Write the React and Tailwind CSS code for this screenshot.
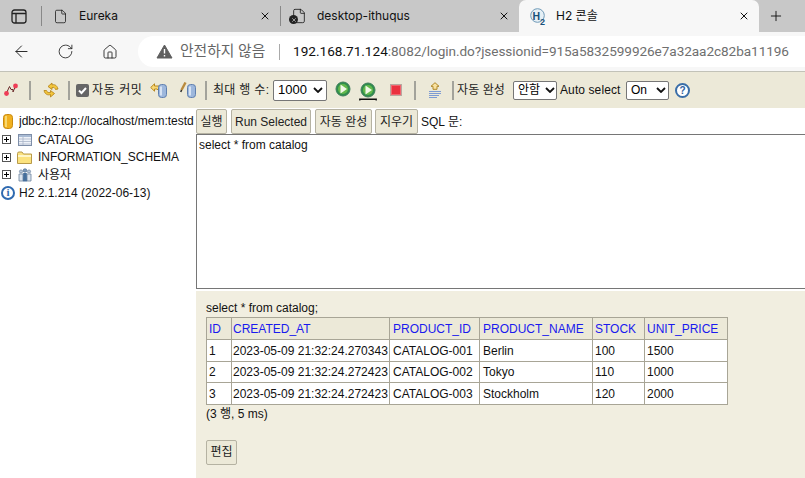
import { ArrowLeft, RotateCw, Home, X, Plus, File } from "lucide-react";

const FONT = "font-['Liberation_Sans','Noto_Sans_CJK_KR',sans-serif]";

function Sep() {
    return <div className="w-[2px] h-[19px] bg-[#a3a39b] shrink-0 -mr-px" />;
}

function DbIcon({ className = "" }) {
    return (
        <svg width="9" height="14" viewBox="0 0 9 14" className={className}>
            <rect x="0.5" y="0.5" width="8" height="13" rx="3" fill="#9db7dc" stroke="#5f7faf" />
            <rect x="2" y="2.5" width="2" height="9" fill="#d6e2f3" />
        </svg>
    );
}

function PlayIcon({ underline }) {
    return (
        <svg width="18" height="19" viewBox="0 0 18 19">
            <circle cx="9" cy="8" r="7" fill="#2f8d4e" stroke="#3f7f5a" />
            <circle cx="9" cy="8" r="5" fill="#63b84c" />
            <path d="M6.5 3.5 L13 8 L6.5 12.5 Z" fill="#f2f8e8" />
            {underline && <path d="M0.8 18.5 V17.2 H17.2 V18.5" fill="none" stroke="#111" strokeWidth="1.4" />}
        </svg>
    );
}

function Toolbar() {
    return (
        <div className="h-[37px] bg-[#ece9d8] border-t border-[#c2c2b8] flex items-center pl-1 text-[12px] text-[#222] shrink-0 whitespace-nowrap">
            <svg width="14" height="14" viewBox="0 0 14 14" className="mr-[11px]">
                <path d="M2.5 10 L5.5 3.5 L7 6.5 L9 6.5 L9 9 L11.5 3" fill="none" stroke="#6b2a2a" strokeWidth="1" />
                <circle cx="2.5" cy="10.5" r="2.4" fill="#ee3d56" />
                <circle cx="11.5" cy="3" r="2.4" fill="#ee3d56" />
            </svg>
            <Sep />
            <svg width="16" height="16" viewBox="0 0 16 16" className="ml-[13px] mr-[9px]">
                <path d="M15 7 C14 3 11 2 9 3 L9 1 L5 4.5 L9 7.5 L9 5.5 C11 5 12 6 12.5 7.5 Z" fill="#f3c63c" stroke="#b27f12" strokeWidth="0.8" />
                <path d="M1 8.5 C2 12.5 5 13.5 7.5 12.5 L7.5 15 L11.5 11.5 L7.5 8.5 L7.5 10.5 C5 11 4 10 3.5 8.5 Z" fill="#f3c63c" stroke="#b27f12" strokeWidth="0.8" />
            </svg>
            <Sep />
            <span className="ml-[7px] w-[13px] h-[13px] bg-[#666] rounded-[2px] flex items-center justify-center shrink-0">
                <svg width="11" height="11" viewBox="0 0 11 11">
                    <path d="M2 5.5 L4.5 8 L9 3" fill="none" stroke="#fff" strokeWidth="2" />
                </svg>
            </span>
            <span className="ml-[3px] w-[50px] tracking-[0.6px]">자동 커밋</span>
            <span className="ml-[8px] flex items-center">
                <svg width="10" height="10" viewBox="0 0 10 10" className="-mt-[5px]">
                    <path d="M0.7 4.5 L4.5 0.8 V3 H9 V8 L7 6 H4.5 V8.2 Z" fill="#f7d774" stroke="#b27f12" strokeWidth="0.9" />
                </svg>
                <DbIcon className="-ml-[2px] mt-[2px]" />
            </span>
            <span className="ml-[13px] flex items-center">
                <svg width="7" height="11" viewBox="0 0 7 11" className="-mt-[5px]">
                    <path d="M5.5 0.5 L1.5 8" stroke="#b98a3c" strokeWidth="2.4" />
                    <path d="M1.5 8 L0.8 10" stroke="#222" strokeWidth="1.4" />
                </svg>
                <DbIcon className="mt-[2px]" />
            </span>
            <div className="ml-[9px]"><Sep /></div>
            <span className="ml-[7px] w-[56px] tracking-[0.3px]">최대 행 수:</span>
            <span className="ml-[4px] w-[54px] h-[21px] bg-white border border-[#767676] rounded-[2px] flex items-center justify-between pl-[4px] pr-[2px] text-[13px] text-black">
                1000
                <svg width="10" height="6" viewBox="0 0 10 6" className="mr-px"><path d="M1 1 L5 5 L9 1" fill="none" stroke="#111" strokeWidth="1.8" /></svg>
            </span>
            <span className="ml-[7px] flex"><PlayIcon /></span>
            <span className="ml-[7px] flex mt-[2px]"><PlayIcon underline /></span>
            <span className="ml-[13px] w-[12px] h-[12px] bg-[#ea3140] border border-[#b8a8a0] shadow-[inset_0_0_0_1px_#f2656f]" />
            <div className="ml-[12px]"><Sep /></div>
            <svg width="14" height="17" viewBox="0 0 14 17" className="ml-[13px] mr-[10px]">
                <path d="M7 0.7 L11 4.3 H9 V7.3 H5 V4.3 H3 Z" fill="#f9e2a0" stroke="#a97f1a" strokeWidth="0.9" />
                <path d="M1 9.5 H13 M1 11.5 H13 M1 13.5 H11 M1 15.5 H9" stroke="#7d9bd3" strokeWidth="1" />
            </svg>
            <Sep />
            <span className="ml-[4px] w-[49px] tracking-[0.1px]">자동 완성</span>
            <span className="ml-[7px] w-[44px] h-[19px] bg-white border border-[#767676] rounded-[2px] flex items-center justify-between pl-[4px] pr-[1px] text-[12px] text-black">
                안함
                <svg width="10" height="6" viewBox="0 0 10 6"><path d="M1 1 L5 5 L9 1" fill="none" stroke="#111" strokeWidth="1.8" /></svg>
            </span>
            <span className="ml-[3px] w-[60px] text-[#111] tracking-[0.1px]">Auto select</span>
            <span className="ml-[6px] w-[43px] h-[19px] bg-white border border-[#767676] rounded-[2px] flex items-center justify-between pl-[4px] pr-[2px] text-[12px] text-black">
                On
                <svg width="10" height="6" viewBox="0 0 10 6"><path d="M1 1 L5 5 L9 1" fill="none" stroke="#111" strokeWidth="1.8" /></svg>
            </span>
            <span className="ml-[6px] w-[15px] h-[15px] rounded-full border-2 border-[#3a6ea8] bg-white text-[#2f62a0] text-[10px] font-bold flex items-center justify-center">?</span>
        </div>
    );
}

function Expander() {
    return (
        <span className="w-[9px] h-[9px] border border-[#555] bg-white flex items-center justify-center shrink-0 relative">
            <span className="w-[5px] h-px bg-black" />
            <span className="absolute w-px h-[5px] bg-black" />
        </span>
    );
}

function TreeRow({ icon, label }) {
    return (
        <div className="h-[17.6px] flex items-center whitespace-nowrap">
            <span className="ml-[2px] mr-[5px]"><Expander /></span>
            <span className="w-[16px] flex justify-center shrink-0 mr-[6px]">{icon}</span>
            <span>{label}</span>
        </div>
    );
}

function Tree() {
    return (
        <div className="w-[196px] shrink-0 overflow-hidden pt-[4px] text-[12px] text-[#111] bg-white">
            <div className="h-[18px] mb-px flex items-center whitespace-nowrap pl-[3px]">
                <svg width="10" height="15" viewBox="0 0 10 15" className="mr-[6px] shrink-0">
                    <rect x="0.5" y="0.5" width="9" height="14" rx="3" fill="#f0b020" stroke="#c88a10" />
                    <rect x="2" y="2" width="2" height="11" fill="#f8d870" />
                </svg>
                <span className="w-[175px] overflow-hidden">jdbc:h2:tcp://localhost/mem:testd</span>
            </div>
            <TreeRow
                label="CATALOG"
                icon={
                    <svg width="14" height="12" viewBox="0 0 14 12" className="ml-[2px]">
                        <rect x="0.5" y="0.5" width="13" height="11" fill="#eef2f8" stroke="#7e8ea8" />
                        <rect x="1" y="1" width="12" height="2" fill="#a9bbd4" />
                        <path d="M1 5 H13 M1 7.5 H13 M1 10 H13 M5 3 V11" stroke="#a8b4c8" strokeWidth="0.8" />
                    </svg>
                }
            />
            <TreeRow
                label="INFORMATION_SCHEMA"
                icon={
                    <svg width="15" height="13" viewBox="0 0 15 13">
                        <path d="M0.5 2.5 Q0.5 1 2 1 H5 L6.5 3 H14.5 V12.5 H0.5 Z" fill="#fbe27e" stroke="#b89a4a" />
                        <rect x="1" y="4" width="13" height="2" fill="#fff6c8" />
                    </svg>
                }
            />
            <TreeRow
                label="사용자"
                icon={
                    <svg width="14" height="14" viewBox="0 0 14 14" className="ml-[2px]">
                        <circle cx="3" cy="3.5" r="1.6" fill="#b6c6da" stroke="#5a7490" strokeWidth="0.6" />
                        <path d="M1 6 H5 V13 H1 Z" fill="#dbe4ee" stroke="#6a829c" strokeWidth="0.8" />
                        <circle cx="11" cy="3.5" r="1.6" fill="#b6c6da" stroke="#5a7490" strokeWidth="0.6" />
                        <path d="M9 6 H13 V13 H9 Z" fill="#dbe4ee" stroke="#6a829c" strokeWidth="0.8" />
                        <circle cx="7" cy="2.5" r="1.8" fill="#7d9abb" stroke="#3d5f85" strokeWidth="0.6" />
                        <path d="M5.2 5 H8.8 L9 13.5 H5 Z" fill="#466f9c" />
                    </svg>
                }
            />
            <div className="h-[17.6px] flex items-center whitespace-nowrap">
                <span className="w-[14px] h-[14px] ml-px mr-[4px] rounded-full border-2 border-[#2f6ab0] text-[#2f6ab0] font-bold text-[11px] leading-none flex items-center justify-center font-['Liberation_Serif',serif]">i</span>
                <span>H2 2.1.214 (2022-06-13)</span>
            </div>
        </div>
    );
}

function Btn({ children, className = "" }) {
    return (
        <span className={`h-[25px] flex items-center justify-center bg-[#ece9d8] border border-[#b5b2a2] rounded-[2px] text-[12px] text-[#222] ${className}`}>
            {children}
        </span>
    );
}

const rows = [
    ["1", "2023-05-09 21:32:24.270343", "CATALOG-001", "Berlin", "100", "1500"],
    ["2", "2023-05-09 21:32:24.272423", "CATALOG-002", "Tokyo", "110", "1000"],
    ["3", "2023-05-09 21:32:24.272423", "CATALOG-003", "Stockholm", "120", "2000"],
];
const heads = ["ID", "CREATED_AT", "PRODUCT_ID", "PRODUCT_NAME", "STOCK", "UNIT_PRICE"];
const widths = ["w-[25px]", "w-[158px]", "w-[90px]", "w-[113px]", "w-[52px]", "w-[83px]"];
const pads = ["pl-[2px]", "pl-[1px]", "pl-[3px]", "pl-[3px]", "pl-[2px]", "pl-[2px]"];

function ResultTable() {
    return (
        <table className="border-collapse table-fixed w-[521px] text-[12px]">
            <thead>
                <tr className="h-[22px] bg-[#ece9d8]">
                    {heads.map((h, i) => (
                        <th key={h} className={`${widths[i]} ${pads[i]} border border-[#a8a596] text-left font-normal text-[#1a1aee]`}>{h}</th>
                    ))}
                </tr>
            </thead>
            <tbody>
                {rows.map((r) => (
                    <tr key={r[0]} className="h-[21.6px] bg-white">
                        {r.map((c, i) => (
                            <td key={i} className={`${pads[i]} pt-[1px] border border-[#a8a596] text-[#111] whitespace-nowrap`}>{c}</td>
                        ))}
                    </tr>
                ))}
            </tbody>
        </table>
    );
}

function Browser() {
    return (
        <>
            <div className="h-[32px] bg-[#c8c8c8] flex items-center text-[12px] text-[#111] shrink-0 font-['Inter','Noto_Sans_CJK_KR',sans-serif]">
                <svg width="16" height="15" viewBox="0 0 16 15" className="ml-[11px] shrink-0">
                    <rect x="1" y="1" width="14" height="13" rx="2.5" fill="none" stroke="#222" strokeWidth="1.3" />
                    <path d="M1 4.5 H15 M5 4.5 V14" stroke="#222" strokeWidth="1.3" />
                </svg>
                <div className="w-px h-[20px] bg-[#888] ml-[14px]" />
                <div className="w-[238px] flex items-center shrink-0">
                    <File size={15} strokeWidth={1.2} className="ml-[11px]" />
                    <span className="ml-[11px] flex-1">Eureka</span>
                    <X size={12} strokeWidth={2} className="mr-[9px]" />
                </div>
                <div className="w-px h-[20px] bg-[#888]" />
                <div className="w-[238px] flex items-center shrink-0">
                    <span className="relative ml-[10px] flex">
                        <File size={16} strokeWidth={1.2} />
                        <span className="absolute -left-[2px] bottom-0 w-[9px] h-[9px] rounded-full bg-[#222] flex items-center justify-center">
                            <X size={6} strokeWidth={2.5} className="text-[#ddd]" />
                        </span>
                    </span>
                    <span className="ml-[10px] flex-1">desktop-ithuqus</span>
                    <X size={12} strokeWidth={2} className="mr-[9px]" />
                </div>
                <div className="w-[240px] h-[32px] bg-[#f7f7f7] rounded-t-[7px] flex items-center shrink-0">
                    <svg width="17" height="17" viewBox="0 0 17 17" className="ml-[11px]">
                        <circle cx="7.5" cy="7.5" r="6.8" fill="#e6eff5" stroke="#6e9ab8" />
                        <text x="2.6" y="11.5" fontSize="10.5" fontWeight="700" fill="#17507a" fontFamily="Liberation Sans">H</text>
                        <text x="10" y="16.5" fontSize="9" fontWeight="700" fill="#17507a" fontFamily="Liberation Sans">2</text>
                    </svg>
                    <span className="ml-[9px] flex-1">H2 콘솔</span>
                    <X size={12} strokeWidth={2} className="mr-[9px]" />
                </div>
                <Plus size={16} strokeWidth={1.4} className="ml-[9px]" />
            </div>
            <div className="h-[39px] bg-[#f7f7f7] flex items-center shrink-0 text-[#222]">
                <ArrowLeft size={19} strokeWidth={1.2} className="ml-[12px]" />
                <RotateCw size={17} strokeWidth={1.2} className="ml-[26px]" />
                <Home size={16} strokeWidth={1.3} className="ml-[28px]" />
                <div className="ml-[20px] flex-1 h-[31px] bg-white rounded-l-full flex items-center font-['Roboto','Noto_Sans_CJK_KR',sans-serif] text-[13.6px] whitespace-nowrap overflow-hidden">
                    <svg width="17" height="15" viewBox="0 0 17 15" className="ml-[18px] shrink-0">
                        <path d="M8.5 1 L16 14 H1 Z" fill="#5f5f5f" stroke="#5f5f5f" strokeLinejoin="round" />
                        <path d="M8.5 5 V9.5 M8.5 11 V12.5" stroke="#fff" strokeWidth="1.4" />
                    </svg>
                    <span className="ml-[7px] w-[87px] text-[#666] text-[14.8px]">안전하지 않음</span>
                    <span className="ml-[12px] w-px h-[16px] bg-[#aaa]" />
                    <span className="ml-[13px] text-[#111]">192.168.71.124</span>
                    <span className="text-[#6f6f6f] tracking-[-0.07px]">:8082/login.do?jsessionid=915a5832599926e7a32aa2c82ba11196</span>
                </div>
            </div>
        </>
    );
}

export default function App() {
    return (
        <div className={`w-[805px] h-[478px] overflow-hidden flex flex-col bg-white ${FONT}`}>
            <Browser />
            <Toolbar />
            <div className="flex flex-1 min-h-0">
                <Tree />
                <div className="flex-1 min-w-0 flex flex-col">
                    <div className="h-[26px] flex items-center gap-[3px] pt-[1px] text-[12px] text-[#111] whitespace-nowrap">
                        <Btn className="w-[31px]">실행</Btn>
                        <Btn className="ml-[1px] w-[80px]">Run Selected</Btn>
                        <Btn className="ml-[1px] w-[57px]">자동 완성</Btn>
                        <Btn className="w-[43px]">지우기</Btn>
                        <span>SQL 문:</span>
                    </div>
                    <div className="h-[155px] border border-[#767676] border-r-0 pl-[2px] pt-[1px] text-[12px] text-[#111] bg-white">
                        select * from catalog
                    </div>
                    <div className="mt-[2px] flex-1 bg-[#f1eee0] pl-[10px] pt-[9px] text-[12px] text-[#111]">
                        <div className="h-[17px] leading-[17px]">select * from catalog;</div>
                        <ResultTable />
                        <div className="h-[17px] leading-[17px] mt-[1px]">(3 행, 5 ms)</div>
                        <Btn className="mt-[17px] w-[31px]">편집</Btn>
                    </div>
                </div>
            </div>
        </div>
    );
}
